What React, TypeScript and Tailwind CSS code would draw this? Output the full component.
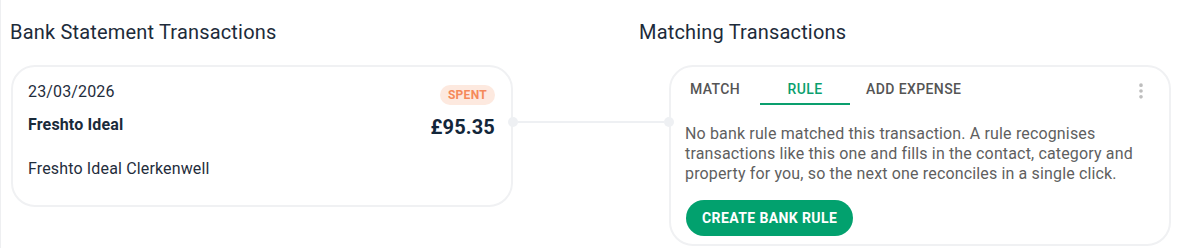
import { EllipsisVertical } from 'lucide-react'

const tabs = ['Match', 'Rule', 'Add expense']

export default function App() {
  const active = 'Rule'

  return (
    <div className="w-[1183px] h-[248px] overflow-hidden bg-white border-l border-[#eeeff1] font-['Roboto',sans-serif] tracking-[0.15px]">
      {/* Column titles */}
      <div className="flex pt-[18px]">
        <h2 className="w-[638px] pl-[9px] text-[20px] leading-[28px] tracking-[0.18px] text-[#1d2b3a]">Bank Statement Transactions</h2>
        <h2 className="text-[20px] leading-[28px] tracking-[0.18px] text-[#1d2b3a]">Matching Transactions</h2>
      </div>

      <div className="flex items-start mt-[19px] pl-[10px]">
        {/* Statement line */}
        <div className="w-[502px] h-[142px] border-2 border-[#f0f1f3] rounded-[24px] pt-[13px] pl-[15px] pr-4">
          <div className="flex items-start justify-between">
            <span className="text-[16px] leading-6 text-[#1f2d3c]">23/03/2026</span>
            <span className="mt-[5px] rounded-full bg-[#fde9df] px-2 text-[12px] leading-5 font-bold tracking-[0.3px] text-[#f5895a]">SPENT</span>
          </div>
          <div className="flex items-start justify-between mt-2">
            <span className="text-[16px] leading-6 font-bold text-[#1a2a3a]">Freshto Ideal</span>
            <span className="text-[20px] leading-[28px] font-bold text-[#13263a]">£95.35</span>
          </div>
          <div className="mt-4 text-[16px] leading-6 text-[#1f2d3c]">Freshto Ideal Clerkenwell</div>
        </div>

        {/* Connector */}
        <div className="relative z-10 flex items-center w-[166px] h-[10px] -mx-[5px] mt-[52px]">
          <div className="w-[10px] h-[10px] rounded-full bg-[#eef0f3]" />
          <div className="flex-1 h-[2px] bg-[#eef0f3]" />
          <div className="w-[10px] h-[10px] rounded-full bg-[#eef0f3]" />
        </div>

        {/* Matching panel */}
        <div className="w-[502px] border-2 border-[#f0f1f3] rounded-[24px] pb-2">
          <div className="flex items-start -ml-px">
            {tabs.map((t) => (
              <div
                key={t}
                className={
                  'min-w-[90px] px-4 pt-3 pb-1 text-center text-[14px] leading-5 font-medium uppercase tracking-[0.4px] border-b-2 ' +
                  (t === active ? 'text-[#0a9f6e] border-[#0a9f6e]' : 'text-[#555555] border-transparent')
                }
              >
                {t}
              </div>
            ))}
            <EllipsisVertical className="ml-auto mr-[18px] mt-[14px] text-[#bdbdbd]" size={20} strokeWidth={2.4} />
          </div>
          <p className="mt-[19px] pl-[14px] pr-[15px] text-[16px] leading-5 text-[#5f5f5f]">
            No bank rule matched this transaction. A rule recognises transactions like this one and fills in the contact,
            category and property for you, so the next one reconciles in a single click.
          </p>
          <button className="mt-4 ml-[15px] h-9 rounded-full bg-[#02a16e] px-4 text-[14px] font-bold tracking-[0.4px] text-white">
            CREATE BANK RULE
          </button>
        </div>
      </div>
    </div>
  )
}
